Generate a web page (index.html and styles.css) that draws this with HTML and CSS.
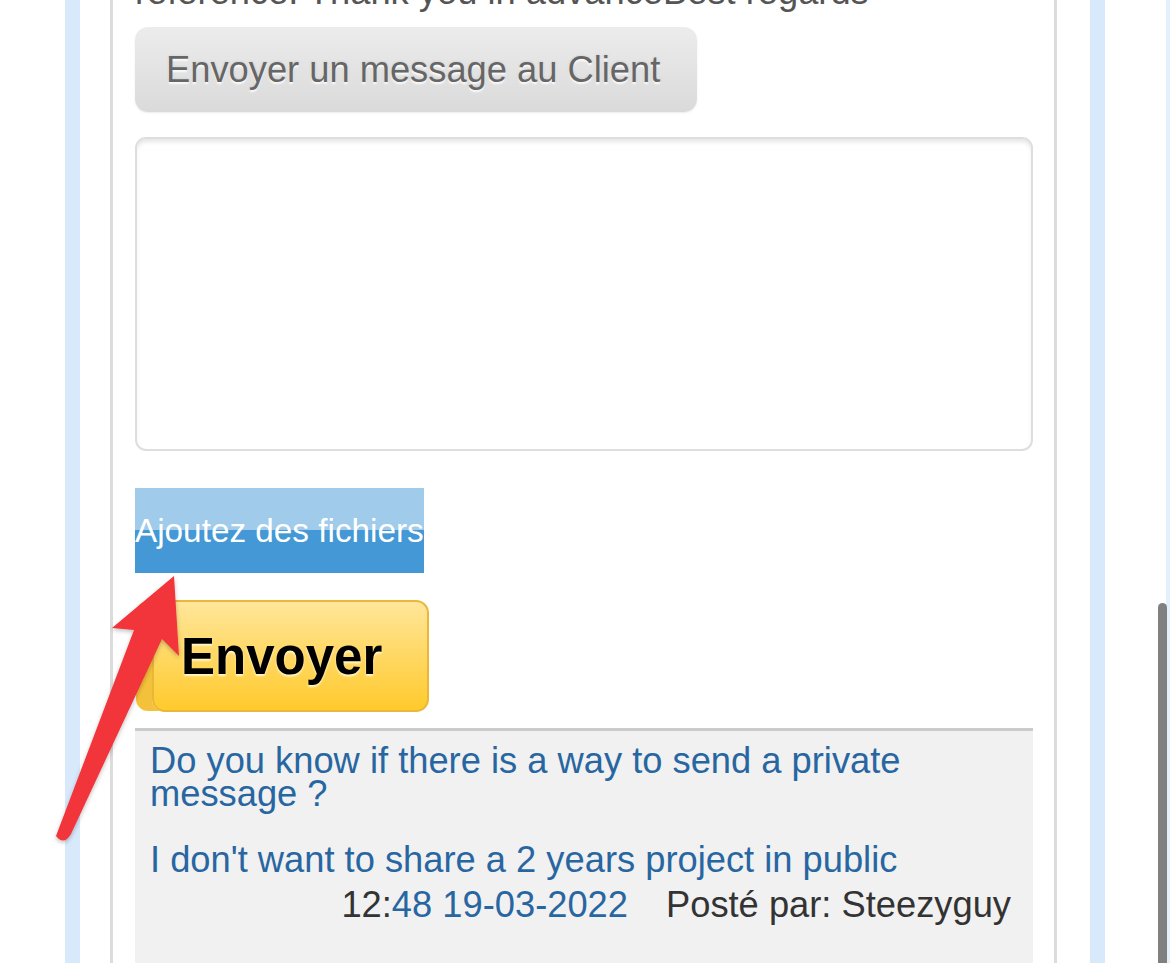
FILE: index.html
```html
<!DOCTYPE html>
<html lang="fr">
<head>
<meta charset="utf-8">
<title>Message</title>
<link rel="stylesheet" href="styles.css">
</head>
<body>
<div class="page">
  <div class="frame">
    <div class="panel">
      <p class="prev-text">reference. Thank you in advanceBest regards</p>
      <button class="btn-msg" type="button">Envoyer un message au Client</button>
      <textarea class="message-box"></textarea>
      <div class="attach">Ajoutez des fichiers</div>
      <div class="send-wrap">
        <button class="btn-send" type="button">Envoyer</button>
      </div>
      <div class="comment">
        <p class="comment-body">Do you know if there is a way to send a private message ?<br><br>I don't want to share a 2 years project in public</p>
        <p class="comment-meta"><span class="dark">12:</span><span class="blue">48 19-03-2022</span><span class="author">Posté par: Steezyguy</span></p>
      </div>
    </div>
  </div>
  <div class="edge-stripe"></div>
</div>
<div class="scrollbar"></div>
<svg class="annotation" width="1170" height="963" viewBox="0 0 1170 963" xmlns="http://www.w3.org/2000/svg">
  <defs>
    <filter id="sh" x="-20%" y="-20%" width="140%" height="140%">
      <feDropShadow dx="0" dy="2" stdDeviation="2" flood-color="#000" flood-opacity="0.25"/>
    </filter>
  </defs>
  <path filter="url(#sh)" fill="#f2353b" d="M174 576 L179 656 L162 639 L71 834 Q64 846 56 836 L134 630 L112 628 Z"/>
</svg>
</body>
</html>
```

FILE: styles.css
```css
html, body {
  margin: 0;
  padding: 0;
  background: #fff;
  overflow: hidden;
}

body {
  font-family: "Liberation Sans", Arial, sans-serif;
  height: 963px;
}

.page {
  display: flex;
  height: 963px;
}

.frame {
  margin-left: 65px;
  width: 1040px;
  box-sizing: border-box;
  border-left: 15px solid #d7e9fb;
  border-right: 15px solid #d7e9fb;
  padding: 0 33px 0 30px;
  display: flex;
}

.panel {
  width: 947px;
  box-sizing: border-box;
  border-left: 3px solid #dcdcdc;
  border-right: 3px solid #dcdcdc;
  padding: 0 21px 0 22px;
  display: flex;
  flex-direction: column;
  align-items: flex-start;
}

.edge-stripe {
  margin-left: auto;
  width: 4px;
  background: #e3effb;
}

.prev-text {
  margin: -26px 0 0;
  font-size: 36.3px;
  line-height: 36px;
  color: #555;
  white-space: nowrap;
}

.btn-msg {
  margin-top: 17px;
  width: 562px;
  height: 85px;
  border: none;
  border-radius: 13px;
  background: linear-gradient(#ececec, #dadada);
  box-shadow: 0 1px 2px rgba(0,0,0,0.08);
  font-family: "Liberation Sans", Arial, sans-serif;
  font-size: 36.3px;
  color: #666;
  text-align: left;
  padding: 0 0 0 31px;
  text-shadow: 0 2px 2px rgba(255,255,255,0.95), 0 0 3px rgba(0,0,0,0.12);
}

.message-box {
  margin-top: 25px;
  width: 898px;
  height: 314px;
  box-sizing: border-box;
  border: 2px solid #dedede;
  border-radius: 11px;
  box-shadow: inset 0 4px 4px -1px rgba(0,0,0,0.1);
  resize: none;
  background: #fff;
  outline: none;
}

.attach {
  margin-top: 37px;
  height: 85px;
  line-height: 85px;
  font-size: 33.3px;
  color: #fff;
  white-space: nowrap;
  background: linear-gradient(#a0cbea 0%, #a0cbea 50%, #4398d5 50%, #4398d5 100%);
}

.send-wrap {
  margin-top: 27px;
  padding-left: 17px;
}

.btn-send {
  display: block;
  width: 277px;
  height: 112px;
  box-sizing: border-box;
  border: 2px solid #eab738;
  border-radius: 13px;
  background: linear-gradient(#ffe69a, #ffca2c);
  box-shadow: -17px 0 0 -1px #f4c23a;
  font-family: "Liberation Sans", Arial, sans-serif;
  font-weight: bold;
  font-size: 51px;
  color: #000;
  text-align: left;
  padding: 0 0 0 27px;
  text-shadow: 0 2px 2px #fff6cc;
}

.comment {
  margin-top: 16px;
  width: 898px;
  flex: 1;
  box-sizing: border-box;
  background: #f1f1f1;
  border-top: 3px solid #cbcbcb;
  padding: 13px 22px 0 15px;
}

.comment-body {
  margin: 0;
  font-size: 36.3px;
  line-height: 33px;
  color: #2866a2;
}

.comment-meta {
  margin: 7px 0 0;
  font-size: 36.3px;
  line-height: 44px;
  text-align: right;
  white-space: nowrap;
}

.dark {
  color: #333;
}

.blue {
  color: #2866a2;
}

.author {
  color: #333;
  margin-left: 38px;
}

.scrollbar {
  position: fixed;
  left: 1158px;
  top: 603px;
  width: 9px;
  height: 400px;
  border-radius: 5px;
  background: #808080;
}

.annotation {
  position: absolute;
  left: 0;
  top: 0;
  pointer-events: none;
}
```
